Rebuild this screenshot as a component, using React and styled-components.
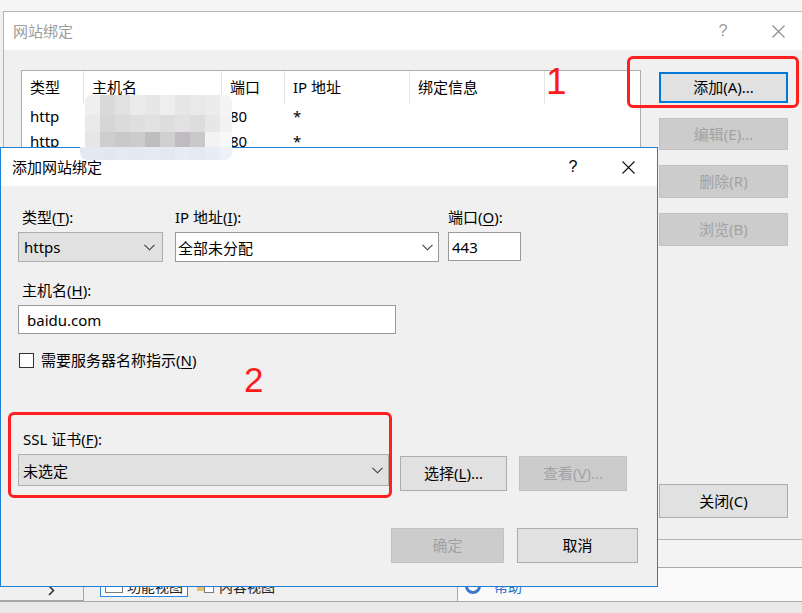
import React from 'react';
import styled, { createGlobalStyle } from 'styled-components';

const GlobalStyle = createGlobalStyle`
  html, body { margin: 0; padding: 0; }
  body {
    font-family: "Noto Sans", "Noto Sans CJK SC", sans-serif;
    font-size: 15px;
    color: #000;
    background: #f0f0f0;
  }
  * { box-sizing: border-box; }
`;

const Desktop = styled.div`
  position: relative;
  width: 802px;
  height: 613px;
  overflow: hidden;
  display: flex;
  flex-direction: column;
  background: #f0f0f0;
`;

const TopStrip = styled.div`
  flex: none;
  height: 11px;
  background: #f5f5f5;
`;

const WindowArea = styled.div`
  flex: none;
  height: 529px;
  padding-left: 3px;
`;

const BackDialog = styled.div`
  width: 804px;
  height: 100%;
  display: flex;
  flex-direction: column;
  background: #f0f0f0;
  border: 1px solid #b4b4b4;
  border-right: none;
`;

const TitleBar = styled.div`
  flex: none;
  height: 38px;
  display: flex;
  align-items: center;
  background: #fff;
  padding-left: ${p => p.$pad}px;
  padding-right: 6px;
  color: ${p => (p.$inactive ? '#9c9c9c' : '#000')};
`;

const TitleText = styled.div`
  flex: 1;
  line-height: 20px;
  white-space: nowrap;
`;

const TitleControls = styled.div`
  display: flex;
  gap: 9px;
`;

const TitleButton = styled.div`
  width: 46px;
  height: 30px;
  display: flex;
  align-items: center;
  justify-content: center;
  font-family: "Liberation Sans", sans-serif;
  font-size: 16px;
`;

const BackContent = styled.div`
  flex: 1;
  display: flex;
  gap: 18px;
  padding: 20px 18px 0 17px;
`;

const ListView = styled.div`
  width: 620px;
  height: 430px;
  background: #fff;
  border: 1px solid #adadad;
`;

const ListRow = styled.div`
  display: grid;
  grid-template-columns: 62px 138px 63px 125px 135px;
  height: ${p => (p.$header ? 33 : 25)}px;
  line-height: ${p => (p.$header ? 32 : 25)}px;
`;

const HeadCell = styled.div`
  padding-left: 8px;
  border-right: 1px solid #e5e5e5;
  white-space: nowrap;
`;

const Cell = styled.div`
  padding-left: 8px;
  white-space: nowrap;
`;

const ButtonColumn = styled.div`
  width: 129px;
  height: 446px;
  margin-top: 2px;
  display: flex;
  flex-direction: column;
  gap: 15px;
`;

const Button = styled.div`
  flex: none;
  width: ${p => (p.$w ? `${p.$w}px` : '100%')};
  height: ${p => p.$h || 31}px;
  margin-top: ${p => (p.$push ? 'auto' : `${p.$mt || 0}px`)};
  display: flex;
  align-items: center;
  justify-content: center;
  white-space: nowrap;
  line-height: 20px;
  padding-bottom: 1px;
  background: ${p => (p.$disabled ? '#cccccc' : '#e1e1e1')};
  color: ${p => (p.$disabled ? '#a2a2a2' : '#000')};
  border: 1px solid ${p => (p.$disabled ? '#c2c2c2' : p.$focused ? '#0078d7' : '#adadad')};
  box-shadow: ${p => (p.$focused ? 'inset 0 0 0 1px #0078d7' : 'none')};
`;

const StatusArea = styled.div`
  flex: none;
  height: 61px;
  display: flex;
  flex-direction: column;
`;

const ActionBar = styled.div`
  height: 27px;
  background: #f3f3f3;
`;

const ViewRow = styled.div`
  flex: 1;
  display: flex;
`;

const ViewTabs = styled.div`
  width: 457px;
  display: flex;
  align-items: flex-end;
  padding-bottom: 4px;
  gap: 4px;
`;

const NavButton = styled.div`
  width: 84px;
  height: 20px;
  margin-bottom: -4px;
  margin-right: 12px;
  display: flex;
  align-items: center;
  justify-content: center;
  padding-left: 20px;
  border-right: 1px solid #a6a6a6;
  border-bottom: 1px solid #a6a6a6;
  background: #f0f0f0;
`;

const ViewTab = styled.div`
  height: 22px;
  display: flex;
  align-items: center;
  gap: 4px;
  padding: 0 4px;
  font-size: 14px;
  color: #222;
  background: ${p => (p.$active ? '#fff' : 'transparent')};
  border: 1px solid ${p => (p.$active ? '#2f88da' : 'transparent')};
`;

const HelpPanel = styled.div`
  flex: 1;
  display: flex;
  align-items: center;
  gap: 12px;
  padding: 2px 0 0 6px;
  background: #fafafa;
  border-top: 1px solid #a8a8a8;
  border-left: 1px solid #a8a8a8;
  color: #2a6fc9;
  font-size: 14px;
`;

const BottomStrip = styled.div`
  flex: none;
  height: 12px;
  background: #e9e9e9;
  border-top: 1px solid #a8a8a8;
`;

const FrontDialog = styled.div`
  position: absolute;
  left: 0;
  top: 147px;
  width: 658px;
  height: 440px;
  z-index: 2;
  display: flex;
  flex-direction: column;
  background: #f0f0f0;
  border: 1px solid #1f7fd4;
`;

const FrontContent = styled.div`
  flex: 1;
  display: flex;
  flex-direction: column;
  padding: 21px 19px 0 17px;
`;

const FieldRow = styled.div`
  display: flex;
  align-items: flex-start;
  margin-top: ${p => p.$mt || 0}px;
`;

const Field = styled.div`
  flex: none;
  display: flex;
  flex-direction: column;
  gap: 5px;
  width: ${p => p.$w}px;
  margin-left: ${p => p.$ml || 0}px;
`;

const Label = styled.div`
  height: 20px;
  line-height: 20px;
  padding-left: ${p => p.$inset ?? 4}px;
  white-space: nowrap;
`;

const Key = styled.span`
  text-decoration: underline;
  text-underline-offset: 2px;
`;

const Combo = styled.div`
  height: ${p => p.$h || 30}px;
  display: flex;
  align-items: center;
  justify-content: space-between;
  padding: 0 ${p => p.$pr ?? 7}px 0 ${p => p.$pl ?? 5}px;
  background: ${p => (p.$white ? '#fff' : '#e1e1e1')};
  border: 1px solid ${p => (p.$white ? '#9a9a9a' : '#adadad')};
  white-space: nowrap;
`;

const CheckRow = styled.div`
  display: flex;
  align-items: center;
  gap: 7px;
  height: 16px;
  margin-top: 18px;
  padding-left: 1px;
`;

const CheckBox = styled.div`
  width: 15px;
  height: 15px;
  background: #fff;
  border: 1px solid #333;
`;

const CheckText = styled.span`
  line-height: 20px;
  white-space: nowrap;
`;

const SslRow = styled.div`
  display: flex;
  align-items: flex-start;
  gap: 11px;
`;

const SideButtons = styled.div`
  display: flex;
  gap: 12px;
  margin-top: 27px;
`;

const FooterRow = styled.div`
  display: flex;
  justify-content: flex-end;
  gap: 13px;
  margin-top: 37px;
`;

const RedBox = styled.div`
  position: absolute;
  left: ${p => p.$x}px;
  top: ${p => p.$y}px;
  width: ${p => p.$w}px;
  height: ${p => p.$h}px;
  border: 3px solid #ff1f1f;
  border-radius: 6px;
  z-index: 5;
`;

const RedNumber = styled.div`
  position: absolute;
  left: ${p => p.$x}px;
  top: ${p => p.$y}px;
  z-index: 5;
  font-family: "Liberation Sans", Arial, sans-serif;
  font-size: ${p => p.$size}px;
  line-height: 1;
  color: #ff1a1a;
`;

const MosaicLayer = styled.svg`
  position: absolute;
  left: 80px;
  top: 95px;
  z-index: 4;
`;

const Chevron = () => (
  <svg width="11" height="7" viewBox="0 0 11 7">
    <polyline points="0.5,0.8 5.5,5.8 10.5,0.8" fill="none" stroke="#3c3c3c" strokeWidth="1.1" />
  </svg>
);

const CloseGlyph = ({ color }) => (
  <svg width="13" height="13" viewBox="0 0 13 13">
    <path d="M0.5 0.5 L12.5 12.5 M12.5 0.5 L0.5 12.5" stroke={color} strokeWidth="1.1" />
  </svg>
);

const mosaicCols = [5, 15, 15, 15, 15, 15, 15, 15, 15, 15, 12];
const mosaicRows = [
  { h: 20, c: ['#efefef', '#d9d9d9', '#e1e1e1', '#ebebeb', '#e7e7e7', '#eeeeee', '#e6e6e6', '#e9e9e9', '#ececec', '#f4f4f4'] },
  { h: 17, c: ['#eaeaea', '#d6d6d6', '#dbdbdb', '#dfdfdf', '#e2e2e2', '#dddddd', '#e1e1e1', '#dcdcdc', '#e7e7e7', '#f2f2f2'] },
  { h: 15, c: ['#e6e6e6', '#cecece', '#c9c9c9', '#cccccc', '#bebebe', '#d0d0d0', '#bfbbc0', '#c9c9c9', '#f3f3f3', '#f8f8f8'] },
  { h: 13, c: ['#e3e9f2', '#e1e8f1', '#e4eaf3', '#e2e9f2', '#e5ebf3', '#e3e9f2', '#e6ecf4', '#e4eaf3', '#e8edf5', '#eef2f8'], full: true },
];

const Mosaic = () => {
  const rects = [];
  let y = 0;
  mosaicRows.forEach((row, ri) => {
    let x = 0;
    mosaicCols.forEach((w, ci) => {
      if (ci === 0) {
        if (row.full) rects.push(<rect key={`${ri}-s`} x={0} y={y} width={w} height={row.h} fill={row.c[0]} />);
      } else {
        rects.push(<rect key={`${ri}-${ci}`} x={x} y={y} width={w} height={row.h} fill={row.c[ci - 1]} />);
      }
      x += w;
    });
    y += row.h;
  });
  return (
    <MosaicLayer width="152" height="65" viewBox="0 0 152 65">
      <defs>
        <clipPath id="mosaic-clip">
          <path d="M5 8 Q5 0 13 0 L144 0 Q152 0 152 8 L152 57 Q152 65 144 65 L8 65 Q0 65 0 57 L0 52 L5 52 Z" />
        </clipPath>
      </defs>
      <g clipPath="url(#mosaic-clip)">{rects}</g>
    </MosaicLayer>
  );
};

const bindings = [
  { type: 'http', port: '80', ip: '*' },
  { type: 'http', port: '80', ip: '*' },
];

export default function App() {
  return (
    <>
      <GlobalStyle />
      <Desktop>
        <TopStrip />
        <WindowArea>
          <BackDialog>
            <TitleBar $pad={9} $inactive>
              <TitleText>网站绑定</TitleText>
              <TitleControls>
                <TitleButton>?</TitleButton>
                <TitleButton><CloseGlyph color="#8a8a8a" /></TitleButton>
              </TitleControls>
            </TitleBar>
            <BackContent>
              <ListView>
                <ListRow $header>
                  <HeadCell>类型</HeadCell>
                  <HeadCell>主机名</HeadCell>
                  <HeadCell>端口</HeadCell>
                  <HeadCell>IP 地址</HeadCell>
                  <HeadCell>绑定信息</HeadCell>
                </ListRow>
                {bindings.map((b, i) => (
                  <ListRow key={i}>
                    <Cell>{b.type}</Cell>
                    <Cell />
                    <Cell>{b.port}</Cell>
                    <Cell>{b.ip}</Cell>
                    <Cell />
                  </ListRow>
                ))}
              </ListView>
              <ButtonColumn>
                <Button $focused>添加(A)...</Button>
                <Button $disabled $h={32}>编辑(E)...</Button>
                <Button $disabled $h={33}>删除(R)</Button>
                <Button $disabled $h={33}>浏览(B)</Button>
                <Button $push $h={34}>关闭(C)</Button>
              </ButtonColumn>
            </BackContent>
          </BackDialog>
        </WindowArea>
        <StatusArea>
          <ActionBar />
          <ViewRow>
            <ViewTabs>
              <NavButton>
                <svg width="7" height="11" viewBox="0 0 7 11">
                  <polyline points="1,1 5.5,5.5 1,10" fill="none" stroke="#333" strokeWidth="1.6" />
                </svg>
              </NavButton>
              <ViewTab $active>
                <svg width="18" height="14" viewBox="0 0 18 14">
                  <rect x="0.5" y="0.5" width="17" height="13" fill="#fff" stroke="#7a7a7a" />
                  <rect x="3" y="4" width="5" height="2" fill="#7aa6d8" />
                  <rect x="10" y="4" width="5" height="2" fill="#7aa6d8" />
                </svg>
                功能视图
              </ViewTab>
              <ViewTab>
                <svg width="18" height="14" viewBox="0 0 18 14">
                  <rect x="0" y="2" width="10" height="10" fill="#e8c06a" />
                  <rect x="7.5" y="1.5" width="9" height="12" fill="#fff" stroke="#7a7a7a" />
                </svg>
                内容视图
              </ViewTab>
            </ViewTabs>
            <HelpPanel>
              <svg width="18" height="18" viewBox="0 0 18 18">
                <circle cx="9" cy="9" r="8" fill="#3b78c8" />
                <circle cx="9" cy="9" r="5" fill="#fff" />
              </svg>
              帮助
            </HelpPanel>
          </ViewRow>
        </StatusArea>
        <BottomStrip />

        <FrontDialog>
          <TitleBar $pad={11}>
            <TitleText>添加网站绑定</TitleText>
            <TitleControls>
              <TitleButton>?</TitleButton>
              <TitleButton><CloseGlyph color="#111" /></TitleButton>
            </TitleControls>
          </TitleBar>
          <FrontContent>
            <FieldRow>
              <Field $w={145}>
                <Label>类型(<Key>T</Key>):</Label>
                <Combo>
                  https
                  <Chevron />
                </Combo>
              </Field>
              <Field $w={264} $ml={12}>
                <Label $inset={0}>IP 地址(<Key>I</Key>):</Label>
                <Combo $white $pl={2} $pr={5}>
                  全部未分配
                  <Chevron />
                </Combo>
              </Field>
              <Field $w={73} $ml={9}>
                <Label $inset={0}>端口(<Key>O</Key>):</Label>
                <Combo $white $pl={3} $h={29}>443</Combo>
              </Field>
            </FieldRow>
            <FieldRow $mt={18}>
              <Field $w={378}>
                <Label>主机名(<Key>H</Key>):</Label>
                <Combo $white $pl={8} $h={29}>baidu.com</Combo>
              </Field>
            </FieldRow>
            <CheckRow>
              <CheckBox />
              <CheckText>需要服务器名称指示(<Key>N</Key>)</CheckText>
            </CheckRow>
            <FieldRow $mt={61}>
              <SslRow>
                <Field $w={371}>
                  <Label $inset={5}>SSL 证书(<Key>F</Key>):</Label>
                  <Combo $h={32} $pl={4} $pr={5}>
                    未选定
                    <Chevron />
                  </Combo>
                </Field>
                <SideButtons>
                  <Button $w={107} $h={35}>选择(<Key>L</Key>)...</Button>
                  <Button $w={108} $h={35} $disabled>查看(<Key>V</Key>)...</Button>
                </SideButtons>
              </SslRow>
            </FieldRow>
            <FooterRow>
              <Button $w={113} $h={35} $disabled>确定</Button>
              <Button $w={121} $h={35}>取消</Button>
            </FooterRow>
          </FrontContent>
        </FrontDialog>

        <Mosaic />
        <RedBox $x={627} $y={56} $w={172} $h={52} />
        <RedBox $x={8} $y={412} $w={384} $h={86} />
        <RedNumber $x={546} $y={63} $size={37}>1</RedNumber>
        <RedNumber $x={244} $y={362} $size={35}>2</RedNumber>
      </Desktop>
    </>
  );
}
